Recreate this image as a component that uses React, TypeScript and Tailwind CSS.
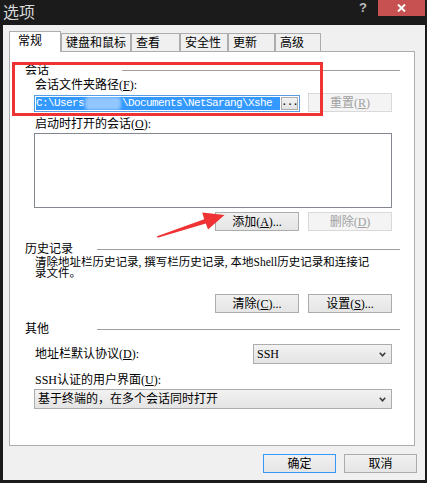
import React from 'react';
import clsx from 'clsx';

const otherTabs = [
  { label: '键盘和鼠标', w: 'w-[70px]' },
  { label: '查看', w: 'w-[49px]' },
  { label: '安全性', w: 'w-[48px]' },
  { label: '更新', w: 'w-[47px]' },
  { label: '高级', w: 'w-[46px]' },
];

function Btn({
  children,
  disabled,
  primary,
  className,
}: {
  children: React.ReactNode;
  disabled?: boolean;
  primary?: boolean;
  className?: string;
}) {
  return (
    <div
      className={clsx(
        'flex h-[19px] items-center justify-center border leading-none',
        disabled
          ? 'border-[#d9d9d9] bg-[#f4f4f4] text-[#a0a0a0]'
          : 'bg-linear-to-b from-[#f0f0f0] to-[#e5e5e5] text-black',
        !disabled && (primary ? 'border-[#3399ff]' : 'border-[#acacac]'),
        className
      )}
    >
      {children}
    </div>
  );
}

function GroupHeader({ label, labelWidth }: { label: string; labelWidth: string }) {
  return (
    <div className="flex h-[14px] items-center">
      <span className={clsx('shrink-0 leading-[14px]', labelWidth)}>{label}</span>
      <div className="h-px flex-1 bg-[#a0a0a0]" />
    </div>
  );
}

function Chevron() {
  return (
    <svg width="7" height="5" viewBox="0 0 7 5" className="shrink-0">
      <path d="M0.8 0.8 L3.5 3.8 L6.2 0.8" fill="none" stroke="#3c3c3c" strokeWidth="1.6" />
    </svg>
  );
}

function Select({ value, className }: { value: string; className?: string }) {
  return (
    <div
      className={clsx(
        'flex h-[20px] items-center justify-between border border-[#acacac] bg-linear-to-b from-[#f2f2f2] to-[#e4e4e4] pl-[3px] pr-[5px]',
        className
      )}
    >
      <span className="leading-none">{value}</span>
      <Chevron />
    </div>
  );
}

export default function App() {
  return (
    <div className="relative h-[483px] w-[427px] overflow-hidden bg-[#1b1b1b] font-['Liberation_Serif','Noto_Sans_CJK_SC',serif] text-[12px] text-black">
      {/* title bar */}
      <div className="flex h-[25px] items-start">
        <div className="flex-1 pl-[3px] font-['Noto_Sans_CJK_SC',sans-serif] text-[16px] leading-[23px] text-[#d8d8d8]">
          选项
        </div>
        <div className="mr-[11px] pt-[1px] font-['Liberation_Sans',sans-serif] text-[13px] font-bold leading-[13px] text-[#bcbcbc]">
          ?
        </div>
        <div className="mr-[2px] flex h-[16px] w-[47px] items-center justify-center bg-[#c75050]">
          <svg width="9" height="8" viewBox="0 0 9 8">
            <path d="M1 0.5 L8 7.5 M8 0.5 L1 7.5" stroke="white" strokeWidth="2" />
          </svg>
        </div>
      </div>

      {/* dialog body */}
      <div className="ml-[3px] mr-[2px] flex h-[455px] flex-col bg-[#f0f0f0] pt-[6px]">
        {/* tabs */}
        <div className="flex h-[21px] items-end pl-[6px]">
          <div className="relative z-10 h-[21px] w-[52px] border border-b-0 border-[#adadad] bg-white pl-[8px] pt-[2px] leading-[14px]">
            常规
          </div>
          {otherTabs.map((t) => (
            <div
              key={t.label}
              className={clsx(
                'mb-px flex h-[18px] items-center border border-b-0 border-[#adadad] bg-[#f0f0f0] pl-[4px] leading-none',
                t.w
              )}
            >
              {t.label}
            </div>
          ))}
        </div>

        {/* tab panel */}
        <div className="-mt-px ml-[6px] flex h-[395px] w-[406px] flex-col border border-[#adadad] bg-white pl-[15px] pr-[14px]">
          {/* 会话 */}
          <div className="mt-[11px]">
            <GroupHeader label="会话" labelWidth="w-[97px]" />
          </div>
          <div className="flex flex-col pl-[9px] pr-[8px]">
            <div className="h-[16px] pl-px leading-[16px]">
              会话文件夹路径(<u>F</u>):
            </div>
            <div className="flex h-[19px] items-end gap-[8px]">
              <div className="flex h-[17px] flex-1 items-center border border-[#569de5] bg-white pl-px pr-px">
                <div className="flex h-[13px] flex-1 items-center overflow-hidden whitespace-nowrap bg-[#3399ff] font-['Liberation_Mono',monospace] text-[11px] leading-none tracking-[-0.6px] text-white">
                  <span>C:\Users</span>
                  <span className="mx-[1px] inline-block h-[13px] w-[36px] rounded-[4px] bg-[#92c6ff] blur-[1.5px]" />
                  <span>\Documents\NetSarang\Xshe</span>
                </div>
                <div className="ml-px flex h-[13px] w-[17px] items-end justify-center border border-[#adadad] bg-linear-to-b from-[#f2f2f2] to-[#e2e2e2] pb-[1px] font-['Liberation_Mono',monospace] text-[11px] leading-none tracking-[-1px]">
                  ...
                </div>
              </div>
              <Btn disabled className="w-[84px]">
                重置(<u>R</u>)
              </Btn>
            </div>
            <div className="mt-[4px] h-[16px] pl-px leading-[16px]">
              启动时打开的会话(<u>O</u>):
            </div>
            <div className="mt-px h-[75px] border border-[#828790] bg-white" />
            <div className="mt-[4px] flex justify-end gap-[9px]">
              <Btn className="w-[84px]">
                添加(<u>A</u>)...
              </Btn>
              <Btn disabled className="w-[84px]">
                删除(<u>D</u>)
              </Btn>
            </div>
          </div>

          {/* 历史记录 */}
          <div className="mt-[11px]">
            <GroupHeader label="历史记录" labelWidth="w-[72px]" />
          </div>
          <div className="flex flex-col pl-[9px] pr-[8px]">
            <div className="mt-[1px] flex flex-col whitespace-nowrap pl-px text-[11.5px]">
              <span className="h-[11px] leading-[11px]">
                清除地址栏历史记录, 撰写栏历史记录, 本地Shell历史记录和连接记
              </span>
              <span className="h-[11px] leading-[11px]">录文件。</span>
            </div>
            <div className="mt-[15px] flex justify-end gap-[9px]">
              <Btn className="w-[84px]">
                清除(<u>C</u>)...
              </Btn>
              <Btn className="w-[84px]">
                设置(<u>S</u>)...
              </Btn>
            </div>
          </div>

          {/* 其他 */}
          <div className="mt-[9px]">
            <GroupHeader label="其他" labelWidth="w-[72px]" />
          </div>
          <div className="flex flex-col pl-[9px] pr-[8px]">
            <div className="mt-[8px] flex h-[20px] items-center justify-between">
              <span className="pl-px leading-none">
                地址栏默认协议(<u>D</u>):
              </span>
              <Select value="SSH" className="w-[139px]" />
            </div>
            <div className="mt-[8px] h-[16px] pl-px leading-[16px]">
              SSH认证的用户界面(<u>U</u>):
            </div>
            <Select value="基于终端的，在多个会话同时打开" className="mt-px" />
          </div>
        </div>

        {/* dialog buttons */}
        <div className="mt-[8px] flex justify-end gap-[8px] pr-[8px]">
          <Btn primary className="w-[73px]">
            确定
          </Btn>
          <Btn className="w-[73px]">取消</Btn>
        </div>
      </div>

      {/* red annotation box */}
      <div className="pointer-events-none absolute left-[12px] top-[62px] h-[54px] w-[311px] border-[3px] border-[#ef3234]" />

      {/* red annotation arrow */}
      <svg className="pointer-events-none absolute left-0 top-0" width="427" height="483" viewBox="0 0 427 483">
        <polygon
          points="157,236.3 204.2,219.2 202.2,212.6 224.5,215 208,229.5 205.8,223.4 157.6,237.8"
          fill="#ef3234"
        />
      </svg>
    </div>
  );
}
